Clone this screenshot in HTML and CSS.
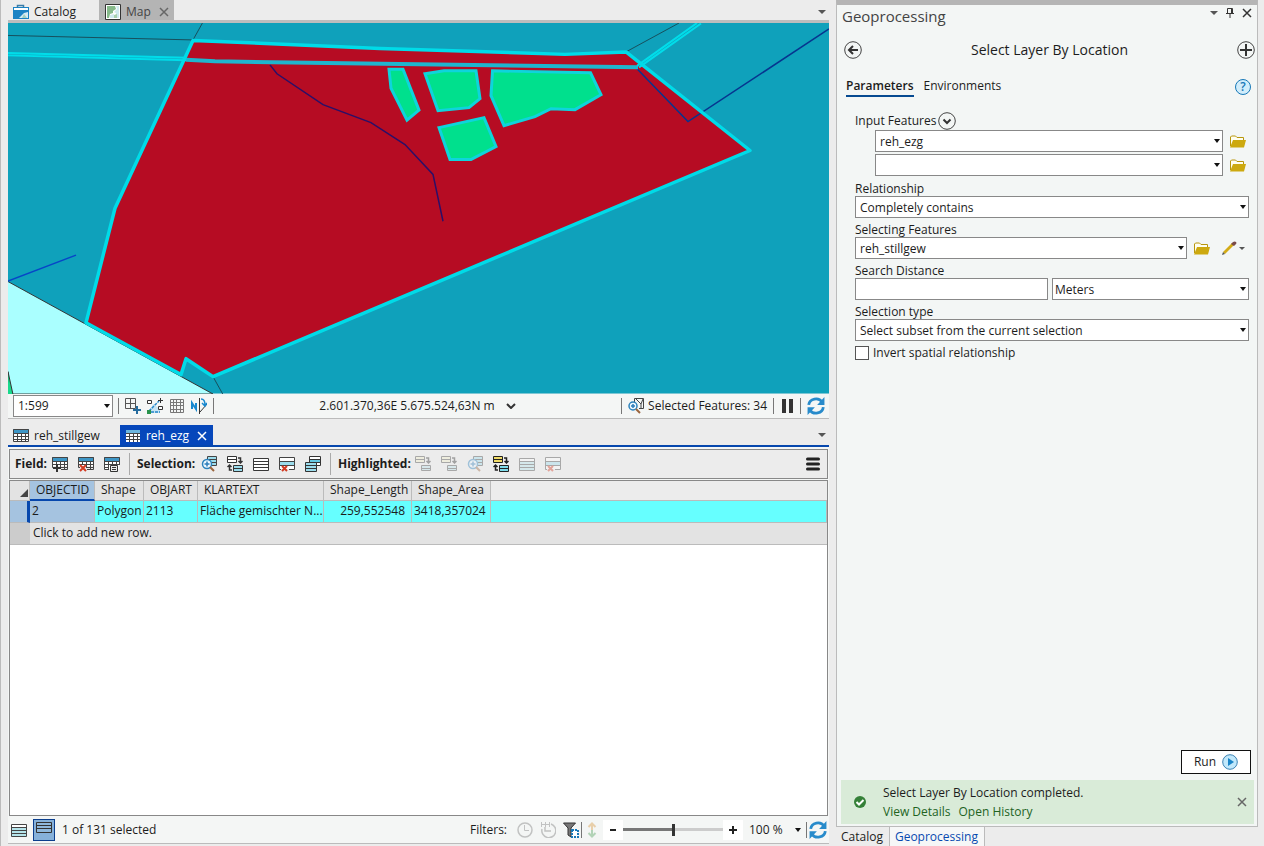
FILE: index.html
```html
<!DOCTYPE html>
<html lang="en">
<head>
<meta charset="utf-8">
<title>Select Layer By Location</title>
<link rel="stylesheet" href="styles.css">
</head>
<body>
<svg class="defs" aria-hidden="true">
  <symbol id="table" viewBox="0 0 16 16"><path fill="#fff" d="M1 2h14v12H1z"/><path fill="#3d96c6" d="M0 1h16v4H0z"/><path fill="none" stroke="#444" d="M.5 1.5h15v12H.5zM1 5.500h14M1 8.500h14M1 11.500h14M4.500 5v9M8.500 5v9M12.500 5v9"/></symbol>
  <symbol id="rows" viewBox="0 0 16 16"><path fill="#fff" stroke="#383838" d="M.5 2.500h15v12H.5z"/><path stroke="#383838" d="M1 5.500h14M1 8.500h14M1 11.500h14"/></symbol>
  <symbol id="rowsblue" viewBox="0 0 16 16"><path fill="#b5e4ea" stroke="#444" d="M.5 2.500h15v12H.5z"/><path fill="#fff" d="M1 3h14v2H1z"/><path stroke="#444" d="M1 5.500h14M1 8.500h14M1 11.500h14"/></symbol>
  <symbol id="tableadd" viewBox="0 0 16 16"><path fill="#fff" d="M1 1h14v9H1z"/><path fill="#3d96c6" d="M0 1h16v4H0z"/><path fill="none" stroke="#444" d="M2 11.500H.5v-10h15v12H9M1 5.500h14M1 8.500h14M8 11.500h7M4.500 5v4M8.500 5v6M12.500 5v9"/><path fill="none" stroke="#333" stroke-width="2" d="M5 8v8M1 12h8"/></symbol>
  <symbol id="tabledel" viewBox="0 0 16 16"><path fill="#fff" d="M1 1h14v9H1z"/><path fill="#3d96c6" d="M0 1h16v4H0z"/><path fill="none" stroke="#444" d="M2 11.500H.5v-10h15v12H9M1 5.500h14M1 8.500h14M8 11.500h7M4.500 5v4M8.500 5v6M12.500 5v9"/><path fill="none" stroke="#d23b22" stroke-width="2" d="M2 9l6 6M8 9l-6 6"/></symbol>
  <symbol id="tablecalc" viewBox="0 0 16 16"><path fill="#fff" d="M1 1h14v12H1z"/><path fill="#3d96c6" d="M0 1h16v4H0z"/><path fill="none" stroke="#444" d="M5 13.500H.5v-12h15V9M1 5.500h14M1 8.500h14M1 11.500h4M4.500 5v8M8.500 5v4M12.500 5v4"/><path fill="#ececec" stroke="#333" d="M6.500 9.500h7v6h-7zM8 11.500h4M8 13.500h4"/></symbol>
  <symbol id="zoomrows" viewBox="0 0 16 16"><path fill="#9bdcec" stroke="#444" d="M6.500.5h9v9h-9zM7 3.500h8M7 6.500h8"/><circle cx="6" cy="8" r="4.500" fill="#eef8ff" stroke="#2d83bd" stroke-width="1.500"/><path stroke="#2d7dba" stroke-width="1.500" d="M3.500 8h5M6 5.500v5"/><path stroke="#9a643c" stroke-width="2" d="M9 11l4 4"/></symbol>
  <symbol id="switch" viewBox="0 0 16 16"><path fill="#fff" stroke="#333" d="M.5.5h9v6h-9zM1 3.500h8"/><path fill="#9bdcec" stroke="#333" d="M6.500 9.500h9v6h-9zM7 12.500h8"/><path fill="none" stroke="#333" stroke-width="1.500" d="M11 2h2.500v5M11.500 5l2 2 2-2M5 14H2.500V9M.5 11l2-2 2 2"/></symbol>
  <symbol id="switchy" viewBox="0 0 16 16"><path fill="#f1dc68" stroke="#222" d="M.5.5h9v6h-9zM1 3.500h8"/><path fill="#7edbea" stroke="#222" d="M6.500 9.500h9v6h-9zM7 12.500h8"/><path fill="none" stroke="#222" stroke-width="1.500" d="M11 2h2.500v5M11.500 5l2 2 2-2M5 14H2.500V9M.5 11l2-2 2 2"/></symbol>
  <symbol id="move" viewBox="0 0 16 16"><path fill="#f2efcb" stroke="#444" d="M.5.5h9v6h-9zM1 3.500h8"/><path fill="#b8e0e8" stroke="#444" d="M6.500 9.500h9v5h-9zM7 12.500h8"/><path fill="none" stroke="#333" stroke-width="1.500" d="M11 2h2.500v5M11.500 5l2 2 2-2"/></symbol>
  <symbol id="rowsx" viewBox="0 0 16 16"><path fill="#fff" d="M1 2h14v11H1z"/><path fill="#9bdcec" d="M1 6h14v3H1z"/><path fill="none" stroke="#444" d="M2 13.500H.5v-12h15v12H10M1 5.500h14M1 9.500h14"/><path stroke="#d23b22" stroke-width="2" d="M3 10l5 5M8 10l-5 5"/></symbol>
  <symbol id="stack" viewBox="0 0 16 16"><path fill="#fff" stroke="#333" d="M4.500.5h11v9h-11z"/><path fill="#65c8e2" d="M5 3h10v4H5z"/><path stroke="#333" d="M5 3.500h10M5 6.500h10"/><path fill="#9bdcec" stroke="#333" d="M.5 6.500h11v9H.5zM1 9.500h10M1 12.500h10"/></symbol>
  <symbol id="refresh" viewBox="0 0 16 16"><path fill="none" stroke="#288bcb" stroke-width="2.500" d="M1.500 7a6.500 6 0 0 1 12-2.500M14.500 9a6.500 6 0 0 1-12 2.500"/><path fill="#288bcb" d="M15.500 0v7H9zM.5 16V9H7z"/></symbol>
  <symbol id="folder" viewBox="0 0 16 13"><path fill="#fffef0" stroke="#b8960c" d="M.5 11V2l1-1h4l1.500 1.500h6.500V5"/><path fill="#cda90f" d="M3 5h13l-2 7.500H0z"/></symbol>
  <symbol id="x" viewBox="0 0 10 10"><path fill="none" stroke="currentColor" stroke-width="1.500" d="M1 1l8 8M9 1L1 9"/></symbol>
</svg>

<div class="app">
  <main class="workspace">
    <nav class="doc-tabs" aria-label="Views">
      <button class="doc-tab"><svg class="icon" viewBox="0 0 16 16"><path fill="none" stroke="#397ca8" stroke-width="1.500" d="M4.500 4V1.500h6V4"/><path fill="#1b82c4" d="M0 3h16v12H0z"/><path fill="#fff" d="M1 4h14v2H1z"/><path fill="#d5eaf3" d="M6 14l5-5 4-1v6z"/><path fill="#9fd0c0" d="M9 14l2-4 3 4z"/></svg>Catalog</button>
      <button class="doc-tab doc-tab-map"><svg class="icon" viewBox="0 0 16 16"><path fill="#fff" stroke="#333" d="M.5.500h15v15H.5z"/><path fill="#86b98a" d="M2 2h8l1 3-3 2v2l-3 1-1 4H2z"/><path fill="#cfe9ee" d="M11 2h3v12h-3V9L9 8l3-3zM5 11l4-1v4H5z"/><path fill="#a8cfae" d="M9 11l3-1v4H9z"/></svg>Map<svg class="tab-x"><use href="#x"/></svg></button>
      <span class="caret push"></span>
    </nav>

    <svg class="map" viewBox="8 23 821 372" preserveAspectRatio="none" role="img" aria-label="Map">
      <path fill="#0fa1bb" d="M8 23h821v372H8z"/>
      <path fill="#aaffff" stroke="#333" d="M7 282l206 113.500H7z"/>
      <path fill="#19d98c" stroke="#333" d="M8 373l5 23H7z"/>
      <path fill="#b60c23" d="M193 40.500l187 8 185 6 61-2.500L750 151 213 378l-27-18-5 16-95-52 29-115z"/>
      <g fill="none">
        <path stroke="#174f5c" d="M8 35.500l185 4.500 10-18M626 52l53-29M213 378l10 18"/>
        <path stroke="#0745c8" stroke-width="1.500" d="M8 282l68-26"/>
        <path stroke="#2b0f68" stroke-width="1.500" d="M270 65l7 9 46 31 48 18 34 22 28 30 10 47"/>
        <path stroke="#07358f" stroke-width="1.500" d="M637 69l51 53 141-93"/>
        <path stroke="#1fb5ce" stroke-width="4" d="M186 60l29 1.500 423 6"/>
        <path stroke="#00ddea" stroke-width="2" d="M8 53l178 5M8 55.500l178 5M639 67.500l62-44M637 66l60-43"/>
        <path stroke="#00dbe8" stroke-width="3.500" stroke-linejoin="round" d="M193 40.500l187 8 185 6 61-2.500L750 151 213 378l-27-18-5 16-95-52 29-115z"/>
      </g>
      <g fill="#00e08d" stroke="#0ed4dc" stroke-width="3">
        <path d="M389 69.500h14l16 41-12 10-16-32z"/>
        <path d="M425 74l19-3h32l4 28-11 9-31 3z"/>
        <path d="M492.500 71l98 2 10.500 22-26 15-24-1-16 8-31 9-13-30z"/>
        <path d="M439 128l45-10 12 29-25 13h-21z"/>
      </g>
    </svg>

    <div class="map-status">
      <label class="scale combo"><select aria-label="Map scale"><option>1:599</option></select></label>
      <i class="sep"></i>
      <button aria-label="Add constraint"><svg class="icon" viewBox="0 0 16 16"><path fill="none" stroke="#555" d="M.5.500h10v10H.5zM5.500 1v9M1 5.500h9"/><path stroke="#256c9e" stroke-width="2" d="M12 8v8M8 12h8"/></svg></button>
      <button aria-label="Snapping"><svg class="icon" viewBox="0 0 16 16"><path fill="#c6e4f4" d="M3 13l3-7 7 5v4H3z"/><path fill="none" stroke="#2486c8" stroke-width="1.500" stroke-dasharray="3 1" d="M2 13L12 3M4 14h9"/><path fill="#fff" stroke="#333" d="M.5 2.500h4v3h-4zM11.500 8.500h4v3h-4zM11 2.500h5M13.500 0v5"/><path fill="#28934b" d="M0 12h4v4H0z"/></svg></button>
      <button aria-label="Grid"><svg class="icon" viewBox="0 0 16 16"><path fill="none" stroke="#777" d="M1.500 1.500h13v13h-13zM4.500 1v14M7.500 1v14M11.500 1v14M1 4.500h14M1 7.500h14M1 11.500h14"/></svg></button>
      <button aria-label="North direction"><svg class="icon" viewBox="0 0 16 16"><path fill="none" stroke="#1788d0" stroke-width="2" d="M1 11V5l4 6V5"/><path stroke="#333" d="M8.500 0v16M9 14l7-8"/><path fill="none" stroke="#1788d0" stroke-width="1.500" d="M10 1q4 0 4 6M11 5l3 3 2-3"/></svg></button>
      <i class="sep"></i>
      <button class="coords">2.601.370,36E 5.675.524,63N m<svg class="chev" viewBox="0 0 10 6"><path fill="none" stroke="#333" stroke-width="2" d="M1 1l4 4 4-4"/></svg></button>
      <i class="sep"></i>
      <button class="selected"><svg class="icon" viewBox="0 0 16 16"><path fill="none" stroke="#444" d="M6.500 4V.5h9v10H11M8 1l5 5 2-5M13 6v4"/><circle cx="5" cy="8" r="4" fill="#eef8ff" stroke="#2d83bd" stroke-width="1.500"/><path stroke="#2d7dba" stroke-width="1.500" d="M3 8h4M5 6v4"/><path stroke="#9a643c" stroke-width="2" d="M8 11l4 4"/></svg>Selected Features: 34</button>
      <i class="sep"></i>
      <button aria-label="Pause drawing" class="pause"><svg class="icon" viewBox="0 0 16 16"><path fill="#333" d="M3 1h4v14H3zM10 1h4v14h-4z"/></svg></button>
      <i class="sep"></i>
      <button aria-label="Refresh map"><svg class="icon big"><use href="#refresh"/></svg></button>
    </div>

    <nav class="table-tabs" aria-label="Tables">
      <button class="table-tab"><svg class="icon"><use href="#table"/></svg>reh_stillgew</button>
      <button class="table-tab table-tab-on"><svg class="icon" viewBox="0 0 16 16"><path fill="#fff" d="M1 2h14v12H1z"/><path fill="#6bb5de" d="M1 2h14v3H1z"/><path fill="none" stroke="#444" d="M1 5.500h14M1 8.500h14M1 11.500h14M4.500 5v9M8.500 5v9M12.500 5v9"/></svg>reh_ezg<svg class="tab-x"><use href="#x"/></svg></button>
      <span class="caret push"></span>
    </nav>

    <section class="attributes">
      <div class="tools">
        <b class="tool-name name-field">Field:</b>
        <button aria-label="Add field"><svg class="icon"><use href="#tableadd"/></svg></button>
        <button aria-label="Delete field"><svg class="icon"><use href="#tabledel"/></svg></button>
        <button aria-label="Calculate field"><svg class="icon"><use href="#tablecalc"/></svg></button>
        <i class="sep"></i>
        <b class="tool-name name-selection">Selection:</b>
        <button aria-label="Zoom to selection"><svg class="icon"><use href="#zoomrows"/></svg></button>
        <button aria-label="Switch selection"><svg class="icon"><use href="#switch"/></svg></button>
        <button aria-label="Clear selection"><svg class="icon"><use href="#rows"/></svg></button>
        <button aria-label="Delete selection"><svg class="icon"><use href="#rowsx"/></svg></button>
        <button aria-label="Copy rows"><svg class="icon"><use href="#stack"/></svg></button>
        <i class="sep"></i>
        <b class="tool-name name-highlighted">Highlighted:</b>
        <button disabled aria-label="Select highlighted"><svg class="icon"><use href="#move"/></svg></button>
        <button disabled aria-label="Unselect highlighted"><svg class="icon"><use href="#move"/></svg></button>
        <button disabled aria-label="Zoom to highlighted"><svg class="icon"><use href="#zoomrows"/></svg></button>
        <button aria-label="Switch highlighted"><svg class="icon"><use href="#switchy"/></svg></button>
        <button disabled aria-label="Clear highlighted"><svg class="icon"><use href="#rowsblue"/></svg></button>
        <button disabled aria-label="Delete highlighted"><svg class="icon"><use href="#rowsx"/></svg></button>
        <button class="push" aria-label="Menu"><svg class="icon" viewBox="0 0 16 16"><path stroke="#222" stroke-width="3" stroke-linecap="round" d="M2.500 3h11M2.500 8h11M2.500 13h11"/></svg></button>
      </div>
      <div class="grid">
        <table>
          <colgroup><col class="c-head"><col class="c-id"><col class="c-shape"><col class="c-objart"><col class="c-klar"><col class="c-len"><col class="c-area"><col></colgroup>
          <thead><tr><th class="corner"><i></i></th><th class="sorted">OBJECTID</th><th>Shape</th><th>OBJART</th><th>KLARTEXT</th><th>Shape_Length</th><th>Shape_Area</th><th class="rest"></th></tr></thead>
          <tbody>
            <tr class="hit"><td class="rowhead"></td><td class="current">2</td><td>Polygon</td><td>2113</td><td class="klar">Fläche gemischter N...</td><td class="num">259,552548</td><td class="num">3418,357024</td><td></td></tr>
            <tr class="new"><td class="newhead"></td><td colspan="7">Click to add new row.</td></tr>
          </tbody>
        </table>
      </div>
      <footer class="table-foot">
        <button aria-label="Show all records"><svg class="icon"><use href="#rowsblue"/></svg></button>
        <button class="show-sel" aria-label="Show selected records"><svg class="icon" viewBox="0 0 16 16"><path fill="#8fb8dc" stroke="#333" d="M.5.500h15v10H.5zM1 3.500h14M1 6.500h14"/></svg></button>
        <span>1 of 131 selected</span>
        <span class="filters push">Filters:</span>
        <button disabled aria-label="Time filter"><svg class="icon" viewBox="0 0 16 16"><circle cx="8" cy="8" r="7" fill="none" stroke="#777" stroke-width="1.500"/><path fill="none" stroke="#777" d="M7.500 3v5.500H12"/></svg></button>
        <button disabled aria-label="Range filter"><svg class="icon" viewBox="0 0 16 16"><path fill="none" stroke="#777" stroke-width="1.500" d="M11 2a7 7 0 1 1-9 5M5 5v4h6"/><path stroke="#777" d="M1 2.500h9M1.500 0v5M5.500 0v5M9.500 0v5"/></svg></button>
        <button aria-label="Selection filter"><svg class="icon" viewBox="0 0 16 16"><path fill="#777" stroke="#333" d="M.5 1h12L8 6v9l-3-2V6z"/><path fill="#fff" stroke="#1878b8" stroke-width="2" stroke-dasharray="2 1" d="M9 8h6v7H9z"/></svg></button>
        <i class="sep"></i>
        <button disabled class="updown" aria-label="Row height"><svg class="icon" viewBox="3 0 10 16"><path fill="none" stroke="#d8963c" stroke-width="2" d="M8 2v6M4.500 5L8 1.500 11.500 5"/><path fill="none" stroke="#52a05c" stroke-width="2" d="M4.500 11L8 14.500 11.500 11M8 8v6"/></svg></button>
        <button class="step step-minus" aria-label="Zoom out"><svg viewBox="0 0 10 10"><path stroke="#222" stroke-width="2" d="M2 5h6"/></svg></button>
        <input type="range" min="0" max="100" value="50" aria-label="Table zoom">
        <button class="step" aria-label="Zoom in"><svg viewBox="0 0 10 10"><path stroke="#222" stroke-width="2" d="M1 5h8M5 1v8"/></svg></button>
        <label class="combo percent"><select aria-label="Zoom percent"><option>100 %</option></select></label>
        <i class="sep"></i>
        <button aria-label="Refresh table"><svg class="icon big"><use href="#refresh"/></svg></button>
      </footer>
    </section>
  </main>

  <aside class="side">
    <section class="pane">
      <header class="pane-head"><h2>Geoprocessing</h2>
        <button aria-label="Pane options"><span class="caret"></span></button>
        <button aria-label="Pin"><svg class="pin" viewBox="0 0 10 12"><path fill="none" stroke="#333" d="M2.500 1.500h5v5h-5zM1 6.500h8M5 7v4M6.500 1v5"/></svg></button>
        <button aria-label="Close"><svg class="tab-x dark"><use href="#x"/></svg></button>
      </header>
      <div class="title-row">
        <button aria-label="Back"><svg class="round" viewBox="0 0 18 18"><circle cx="9" cy="9" r="8.300" fill="none" stroke="#444"/><path fill="none" stroke="#333" stroke-width="2" d="M14 9H5M9 5L5 9l4 4"/></svg></button>
        <h1>Select Layer By Location</h1>
        <button aria-label="Add"><svg class="round" viewBox="0 0 18 18"><circle cx="9" cy="9" r="8.300" fill="none" stroke="#444"/><path stroke="#333" stroke-width="2" d="M3 9h12M9 3v12"/></svg></button>
      </div>
      <div class="param-tabs">
        <button class="param-tab param-on">Parameters</button>
        <button class="param-tab">Environments</button>
        <button class="help push" aria-label="Help">?</button>
      </div>
      <form class="form">
        <div class="caption caption-first"><label for="in1">Input Features</label><button type="button" aria-label="Add many"><svg class="round" viewBox="0 0 18 18"><circle cx="9" cy="9" r="8.300" fill="none" stroke="#444"/><path fill="none" stroke="#333" stroke-width="2" d="M5.500 7.500L9 11l3.500-3.500"/></svg></button></div>
        <div class="inputs">
          <div class="line"><span class="combo"><select id="in1"><option>reh_ezg</option></select></span><button type="button" aria-label="Browse"><svg class="folder"><use href="#folder"/></svg></button></div>
          <div class="line"><span class="combo"><select aria-label="Input Features 2"><option></option></select></span><button type="button" aria-label="Browse"><svg class="folder"><use href="#folder"/></svg></button></div>
        </div>
        <label class="caption" for="rel">Relationship</label>
        <span class="combo"><select id="rel"><option>Completely contains</option></select></span>
        <label class="caption" for="sel">Selecting Features</label>
        <div class="line"><span class="combo"><select id="sel"><option>reh_stillgew</option></select></span><button type="button" aria-label="Browse"><svg class="folder"><use href="#folder"/></svg></button><button type="button" class="edit" aria-label="Draw features"><svg class="icon" viewBox="0 0 16 16"><path fill="#d3ab16" d="M2 12L11 3l2 2-9 9z"/><path fill="#7a4b4a" d="M10 4l2-2q2-1 3 0t0 2l-2 2z"/><path fill="#555" d="M1 15l1-3 2 2z"/></svg><span class="caret"></span></button></div>
        <label class="caption" for="dist">Search Distance</label>
        <div class="split"><input id="dist" type="text"><span class="combo units"><select aria-label="Distance units"><option>Meters</option></select></span></div>
        <label class="caption" for="type">Selection type</label>
        <span class="combo"><select id="type"><option>Select subset from the current selection</option></select></span>
        <label class="check"><input type="checkbox">Invert spatial relationship</label>
      </form>
      <button class="run">Run<svg class="icon" viewBox="0 0 16 16"><circle cx="8" cy="8" r="7.300" fill="#c1e8fb" stroke="#3c83b4"/><path fill="#1a85c8" d="M6 4l6 4-6 4z"/></svg></button>
      <div class="message" role="status">
        <svg class="ok" viewBox="0 0 12 12"><circle cx="6" cy="6" r="6" fill="#358038"/><path fill="none" stroke="#fff" stroke-width="2" d="M2.500 6L5 8.500l4.500-4.500"/></svg>
        <div class="message-text"><p>Select Layer By Location completed.</p><p class="links"><a href="#details">View Details</a><a href="#history">Open History</a></p></div>
        <button aria-label="Dismiss"><svg class="tab-x"><use href="#x"/></svg></button>
      </div>
    </section>
    <nav class="side-tabs" aria-label="Panes"><button>Catalog</button><button class="side-on">Geoprocessing</button></nav>
  </aside>
</div>
</body>
</html>
```

FILE: styles.css
```css
* { box-sizing: border-box; }
body {
  margin: 0;
  background: #ececec;
  color: #1c1c1c;
  font: 12px/16px "Open Sans", "Noto Sans", sans-serif;
}
.defs { position: absolute; width: 0; height: 0; }
button, select, input { font: inherit; color: inherit; margin: 0; }
button {
  display: flex;
  align-items: center;
  padding: 0;
  border: 0;
  background: none;
  white-space: nowrap;
}
button:disabled { opacity: 0.4; }
svg { display: block; flex: none; }
h1, h2, p { margin: 0; font-weight: 400; }
.icon { width: 16px; height: 16px; }
.big { width: 18px; height: 18px; }
.push { margin-left: auto; }
.tab-x { width: 10px; height: 10px; color: #666; }
.dark { color: #333; }
.sep { width: 1px; height: 16px; background: #777; flex: none; }
.caret {
  border: 4px solid transparent;
  border-top-color: #555;
  border-bottom: 0;
}
.app {
  display: grid;
  grid-template-columns: minmax(0, 821fr) minmax(0, 422fr);
  gap: 7px;
  min-height: 100vh;
  padding: 0 6px 0 7px;
  border-left: 1px solid #bbb;
}

/* Map view */
.workspace { display: flex; flex-direction: column; min-width: 0; padding-bottom: 2px; }
.doc-tabs {
  display: flex;
  align-items: center;
  height: 23px;
  border-bottom: 3px solid #bdbdbd;
}
.doc-tabs .caret, .table-tabs .caret { margin-right: 3px; }
.doc-tabs .caret { margin-top: 4px; }
.doc-tab { gap: 5px; height: 20px; padding: 3px 23px 0 5px; }
.doc-tab-map { padding: 3px 5px 0 6px; background: #b4b4b4; color: #444; }
.doc-tab-map .tab-x { margin-left: 3px; }
.map { width: 100%; height: 0; flex: 372 1 0; min-height: 200px; }
.map-status {
  display: flex;
  align-items: center;
  gap: 6px;
  height: 25px;
  padding: 0 4px 0 5px;
  background: #f4f6f5;
  border-bottom: 1px solid #bbb;
}
.scale { width: 100px; margin-right: -1px; }
.coords { margin: 0 auto; gap: 11px; }
.chev { width: 10px; height: 6px; }
.selected { gap: 4px; }
.pause { margin: 0 -1px; }

/* Table view */
.table-tabs {
  display: flex;
  align-items: center;
  height: 22px;
  margin-top: 6px;
  border-bottom: 2px solid #0647ad;
}
.table-tab { gap: 5px; height: 20px; padding: 2px 20px 0 5px; }
.table-tab-on { padding: 2px 6px 0 5px; background: #0647bb; color: #fff; }
.table-tab-on .tab-x { margin-left: 3px; color: #fff; }
.attributes {
  display: flex;
  flex-direction: column;
  flex: 396 1 0;
  min-height: 240px;
  padding: 2px 1px 0;
  background: #f4f6f5;
  border-bottom: 1px solid #bbb;
}
.tools {
  display: flex;
  align-items: center;
  gap: 10px;
  height: 30px;
  padding: 0 6px 0 5px;
  background: #ececec;
  border: 1px solid #888;
}
.tools .sep { height: 22px; margin: 0 -3px 0 -1px; background: #aaa; }
.tool-name { white-space: nowrap; font-weight: 700; }
.name-field { width: 27px; }
.name-selection { width: 54px; }
.name-highlighted { width: 67px; }
.grid {
  flex: 1;
  margin-top: 1px;
  overflow: hidden;
  background: #fff;
  border: 1px solid #888;
}
table { width: 100%; table-layout: fixed; border-collapse: separate; border-spacing: 0; }
.c-head { width: 20px; }
.c-id { width: 65px; }
.c-shape { width: 49px; }
.c-objart { width: 54px; }
.c-klar { width: 126px; }
.c-len { width: 88px; }
.c-area { width: 79px; }
th, td {
  padding: 0 2px;
  border-right: 1px solid #bbb;
  border-bottom: 1px solid #bbb;
  text-align: left;
  white-space: nowrap;
  font-weight: 400;
}
th { height: 20px; padding: 0 6px; background: #e3e3e3; }
td { height: 22px; }
th.corner { padding: 0; vertical-align: bottom; }
.corner i {
  display: block;
  width: 8px;
  margin: 0 1px 3px auto;
  border-left: 8px solid transparent;
  border-bottom: 8px solid #444;
}
th.sorted { background: #a5c3e0; border-bottom: 2px solid #0647ad; }
th.rest { background: #ececec; border-right: 0; }
.hit td { background: #66ffff; }
.hit .rowhead { background: #a5c3e0; border-right: 3px solid #0647ad; }
.hit .current { background: #a5c3e0; }
.hit .num { padding-right: 6px; text-align: right; }
.new td { background: #e3e3e3; padding-left: 3px; border-right: 0; }
.new .newhead { background: #ccc; }
.table-foot {
  display: flex;
  align-items: center;
  gap: 7px;
  height: 27px;
  padding: 0 1px 0 2px;
}
.show-sel { width: 22px; height: 22px; justify-content: center; margin-left: -1px; background: #86b1da; border: 1px solid #0b3e8d; }
.show-sel + span { white-space: nowrap; }
.filters { margin-right: 3px; }
.table-foot > .sep { margin: 0 -5px; }
.updown { margin: 0 0 0 3px; }
.updown .icon { width: 10px; }
.step { width: 20px; height: 20px; justify-content: center; margin: 0 -7px; background: #fff; }
.step-minus { margin-left: -1px; }
.step svg { width: 10px; height: 10px; }
input[type="range"] {
  appearance: none;
  width: 100px;
  height: 12px;
  background: linear-gradient(90deg, #777 50%, #ccc 50%) center / 100% 3px no-repeat;
}
input[type="range"]::-webkit-slider-thumb { appearance: none; width: 3px; height: 12px; background: #333; }
.percent { width: 59px; margin-left: 2px; }
.table-foot .percent select { background: none; border: 0; }

/* Drop-downs and text boxes */
.combo { display: block; position: relative; min-width: 0; }
.combo::after {
  content: "";
  position: absolute;
  right: 3px;
  top: 9px;
  border: 3px solid transparent;
  border-top: 4px solid #111;
  border-bottom: 0;
  pointer-events: none;
}
select, input[type="text"] {
  display: block;
  appearance: none;
  width: 100%;
  height: 22px;
  padding: 1px 14px 0 4px;
  border: 1px solid #888;
  border-radius: 0;
  background: #fff;
}

/* Geoprocessing pane */
.side { display: flex; flex-direction: column; min-width: 0; }
.pane {
  display: flex;
  flex-direction: column;
  flex: 1;
  padding: 0 3px 2px 4px;
  background: #f3f6f5;
  border: 1px solid #bbb;
  border-top: 5px solid #b5b5b5;
}
.pane-head { display: flex; align-items: flex-start; gap: 7px; height: 35px; padding: 2px 2px 0 1px; }
.pane-head h2 { flex: 1; font-size: 15px; line-height: 18px; color: #444; }
.pane-head button { height: 12px; }
.pin { width: 10px; height: 12px; }
.title-row { display: flex; align-items: center; height: 20px; margin: 0 -1px 0 3px; }
.title-row h1 { flex: 1; text-align: center; font-size: 14px; line-height: 20px; }
.round { width: 18px; height: 18px; }
.param-tabs { display: flex; align-items: flex-start; gap: 10px; margin-top: 17px; padding: 0 3px 0 5px; }
.param-tab { height: 20px; border-bottom: 2px solid transparent; }
.param-on { font-weight: 600; border-color: #064a91; }
.help {
  justify-content: center;
  width: 16px;
  height: 16px;
  margin-top: 2px;
  border: 1px solid #1678b8;
  border-radius: 50%;
  background: #d1edfb;
  color: #1678b8;
  font-weight: 600;
}
.form { padding: 14px 5px 0 14px; }
.caption { display: block; height: 19px; padding-top: 4px; line-height: 15px; }
.caption-first { display: flex; align-items: center; gap: 2px; padding: 0; }
.inputs { display: grid; gap: 2px; padding-left: 20px; margin-bottom: 1px; }
.line { display: flex; align-items: center; gap: 7px; padding-right: 3px; }
.line .combo { flex: 1; }
.folder { width: 16px; height: 13px; }
.edit { gap: 2px; margin: 0 1px 0 4px; }
.edit .caret { border-width: 3px; border-bottom: 0; }
.split { display: grid; grid-template-columns: 193fr 197fr; gap: 4px; }
.units select { padding-left: 2px; }
.check { display: flex; align-items: center; gap: 4px; margin-top: 4px; }
.check input { appearance: none; width: 14px; height: 14px; background: #fff; border: 1px solid #555; }
.run {
  align-self: flex-end;
  justify-content: center;
  gap: 6px;
  width: 70px;
  height: 24px;
  margin: auto 3px 6px 0;
  border: 1px solid #111;
  background: #fff;
}
.message {
  display: flex;
  align-items: center;
  min-height: 44px;
  padding: 0 7px 0 13px;
  background: #d9ebd8;
}
.ok { width: 12px; height: 12px; }
.message-text { flex: 1; margin-left: 17px; line-height: 19px; }
.links { display: flex; gap: 8px; }
.message a { color: #22631f; text-decoration: none; }
.side-tabs { display: flex; height: 19px; }
.side-tabs button { padding: 0 6px 0 5px; border-right: 1px solid #bbb; }
.side-tabs .side-on { background: #f6f7f7; color: #074ab0; }
```
